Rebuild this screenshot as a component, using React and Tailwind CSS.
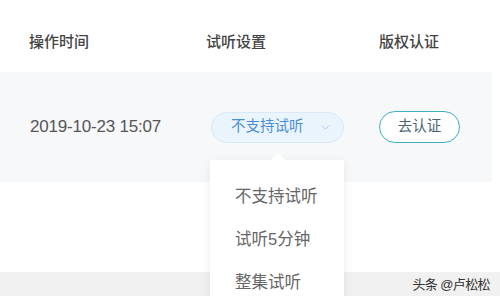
import { ChevronDown } from "lucide-react";

const font = { fontFamily: '"Liberation Sans", Arial, "Noto Sans CJK SC", sans-serif' };

export default function App() {
  return (
    <div className="relative w-[500px] h-[296px] overflow-hidden bg-white" style={font}>
      {/* table header */}
      <div className="grid grid-cols-[177px_173px_1fr] pl-[29px] h-[72px] items-center pt-[12px] text-[15px] font-medium text-[#444]">
        <span>操作时间</span>
        <span>试听设置</span>
        <span>版权认证</span>
      </div>

      {/* table row */}
      <div className="grid grid-cols-[181px_168px_1fr] pl-[30px] h-[110px] items-center bg-[#f7f8fa] mr-[8px]">
        <span className="text-[17px] text-[#555] tracking-[-0.2px]">2019-10-23 15:07</span>
        <div className="flex items-center w-[133px] h-[31px] rounded-full border border-[#d9e9f7] bg-[#eaf4fd] pl-[19px] text-[14.5px] text-[#4a8fd6]">
          <span>不支持试听</span>
          <ChevronDown className="ml-[15px] w-[13px] h-[13px] text-[#9cc3ea]" strokeWidth={1.5} />
        </div>
        <button className="w-[81px] h-[32px] rounded-full border-[1.5px] border-[#3fb0c6] bg-white text-[14.5px] text-[#4b6470]">
          去认证
        </button>
      </div>

      {/* empty area + bottom band */}
      <div className="h-[90px]" />
      <div className="h-[24px] bg-[#f1f1f1] flex items-center justify-end pr-[10px] pt-[1px]">
        <span className="text-[13px] tracking-[-0.6px] text-[#333]">头条 @卢松松</span>
      </div>

      {/* dropdown menu */}
      <div className="absolute left-[210px] top-[160px] w-[134px] h-[150px] bg-white shadow-[0_2px_10px_rgba(0,0,0,0.08)] flex flex-col pl-[25px] pt-[25px] gap-[21px] text-[16.5px] text-[#666]">
        <div className="absolute -top-[5px] left-[63px] w-[10px] h-[10px] rotate-45 bg-white" />
        <span className="leading-[22px]">不支持试听</span>
        <span className="leading-[22px]">试听5分钟</span>
        <span className="leading-[22px]">整集试听</span>
      </div>
    </div>
  );
}
